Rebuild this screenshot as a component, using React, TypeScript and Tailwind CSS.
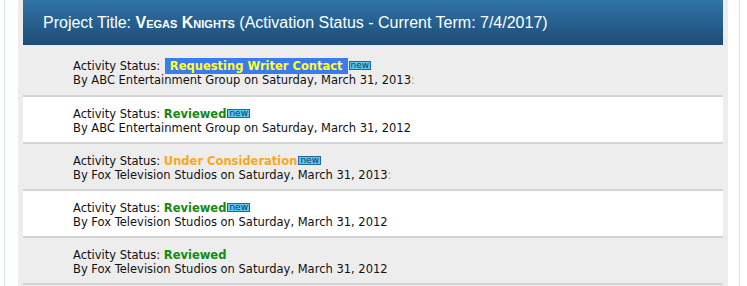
const rows = [
  { status: "Requesting Writer Contact", kind: "request", by: "ABC Entertainment Group", date: "Saturday, March 31, 2013", isNew: true, tail: ":" },
  { status: "Reviewed", kind: "reviewed", by: "ABC Entertainment Group", date: "Saturday, March 31, 2012", isNew: true, tail: "" },
  { status: "Under Consideration", kind: "consider", by: "Fox Television Studios", date: "Saturday, March 31, 2013", isNew: true, tail: ":" },
  { status: "Reviewed", kind: "reviewed", by: "Fox Television Studios", date: "Saturday, March 31, 2012", isNew: true, tail: "" },
  { status: "Reviewed", kind: "reviewed", by: "Fox Television Studios", date: "Saturday, March 31, 2012", isNew: false, tail: "" },
];

const NewBadge = () => (
  <span className="inline-flex items-center justify-center h-[9px] px-[1px] ml-[1px] bg-[#5cc8f0] border border-[#1f6a9a] text-[#10385a] text-[9px] leading-none font-['DejaVu_Sans',sans-serif] align-[2px]">
    new
  </span>
);

const StatusLabel = ({ kind, text }: { kind: string; text: string }) => {
  if (kind === "request") {
    return (
      <span className="bg-[#3a7bf0] text-[#ffff33] font-bold px-[5px] py-[1px] ml-[1px]">{text}</span>
    );
  }
  if (kind === "consider") {
    return <span className="text-[#f7a81d] font-bold">{text}</span>;
  }
  return <span className="text-[#138a13] font-bold">{text}</span>;
};

export default function App() {
  return (
    <div className="w-[747px] h-[286px] bg-white flex overflow-hidden">
      <div className="w-[5px] shrink-0 border-r border-[#d8e0ea]" />
      <div className="w-[13px] shrink-0" />
      <div className="w-[710px] shrink-0 bg-[#ededed] px-[5px]">
        {/* header */}
        <div className="h-[45px] flex items-center pl-[20px] bg-gradient-to-b from-[#2f74a6] to-[#1e4c76] text-white text-[16px] font-['Liberation_Sans',Arial,sans-serif] pt-[1px]">
          <span>
            Project Title:{" "}
            <span className="font-bold [font-variant:small-caps]">Vegas Knights</span>{" "}
            (Activation Status - Current Term: 7/4/2017)
          </span>
        </div>

        {rows.map((r, i) => (
          <div
            key={i}
            className={`${i % 2 === 1 ? "bg-white" : "bg-[#ededed]"} ${i === 0 ? "h-[52px] pt-[15px]" : "h-[47px] pt-[11px]"} border-b-2 border-[#d4d4d4] pl-[50px] text-[11.5px] leading-[13.5px] text-[#111] font-['DejaVu_Sans',Verdana,sans-serif]`}
          >
            <div className="whitespace-nowrap">
              Activity Status: <StatusLabel kind={r.kind} text={r.status} />
              {r.isNew && <NewBadge />}
            </div>
            <div className="whitespace-nowrap">
              By {r.by} on {r.date}
              {r.tail && <span className="text-[#c8a060]">{r.tail}</span>}
            </div>
          </div>
        ))}
      </div>
      <div className="w-[12px] shrink-0 border-r border-[#d8e0ea]" />
    </div>
  );
}
